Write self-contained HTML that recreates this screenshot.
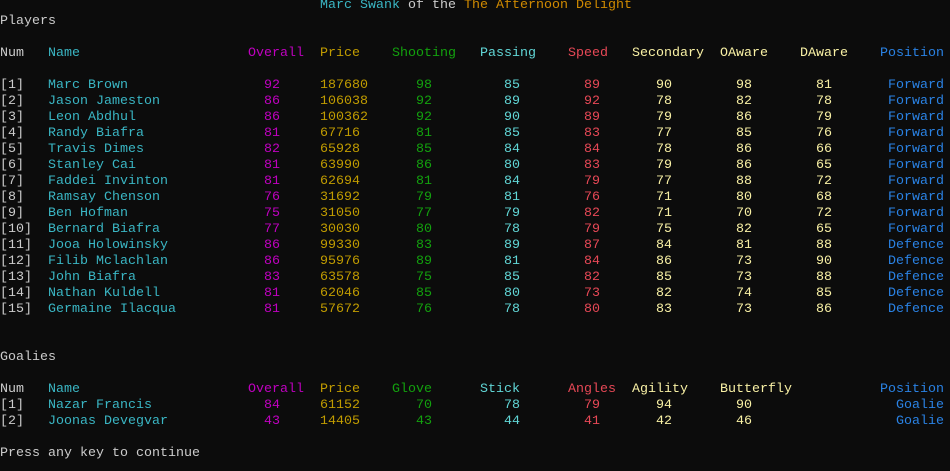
<!DOCTYPE html>
<html><head><meta charset="utf-8"><style>
body{margin:0;width:950px;height:469px;background:#0c0c0c;overflow:hidden;position:relative;font-family:"Liberation Mono",monospace;font-size:13.33px;line-height:16px;color:#cccccc}
#w{position:absolute;left:0;top:2px;width:950px;height:469px}
.c{position:absolute;white-space:pre}
.w{color:#cccccc}.cy{color:#3ab6c4}.m{color:#c000c0}.y{color:#c19c00}.g{color:#13a10e}.pc{color:#61d6d6}.r{color:#e74856}.ly{color:#f9f1a5}.b{color:#2a82e4}.o{color:#d08a00}
</style></head><body><div id="w">
<div class="c" style="left:320px;top:-4px"><span class="cy">Marc Swank</span> of the <span class="o">The Afternoon Delight</span></div>
<div class="c" style="left:0;top:12px">Players</div>
<div class="c" style="left:0;top:44px">Num</div>
<div class="c cy" style="left:48px;top:44px">Name</div>
<div class="c m" style="left:248px;top:44px">Overall</div>
<div class="c y" style="left:320px;top:44px">Price</div>
<div class="c g" style="left:392px;top:44px">Shooting</div>
<div class="c pc" style="left:480px;top:44px">Passing</div>
<div class="c r" style="left:568px;top:44px">Speed</div>
<div class="c ly" style="left:632px;top:44px">Secondary</div>
<div class="c ly" style="left:720px;top:44px">OAware</div>
<div class="c ly" style="left:800px;top:44px">DAware</div>
<div class="c b" style="left:880px;top:44px">Position</div>

<div class="c" style="left:0;top:76px">[1]
[2]
[3]
[4]
[5]
[6]
[7]
[8]
[9]
[10]
[11]
[12]
[13]
[14]
[15]</div>
<div class="c cy" style="left:48px;top:76px">Marc Brown
Jason Jameston
Leon Abdhul
Randy Biafra
Travis Dimes
Stanley Cai
Faddei Invinton
Ramsay Chenson
Ben Hofman
Bernard Biafra
Jooa Holowinsky
Filib Mclachlan
John Biafra
Nathan Kuldell
Germaine Ilacqua</div>
<div class="c m" style="left:264px;top:76px">92
86
86
81
82
81
81
76
75
77
86
86
83
81
81</div>
<div class="c y" style="left:320px;top:76px">187680
106038
100362
67716
65928
63990
62694
31692
31050
30030
99330
95976
63578
62046
57672</div>
<div class="c g" style="left:416px;top:76px">98
92
92
81
85
86
81
79
77
80
83
89
75
85
76</div>
<div class="c pc" style="left:504px;top:76px">85
89
90
85
84
80
84
81
79
78
89
81
85
80
78</div>
<div class="c r" style="left:584px;top:76px">89
92
89
83
84
83
79
76
82
79
87
84
82
73
80</div>
<div class="c ly" style="left:656px;top:76px">90
78
79
77
78
79
77
71
71
75
84
86
85
82
83</div>
<div class="c ly" style="left:736px;top:76px">98
82
86
85
86
86
88
80
70
82
81
73
73
74
73</div>
<div class="c ly" style="left:816px;top:76px">81
78
79
76
66
65
72
68
72
65
88
90
88
85
86</div>
<div class="c b" style="left:888px;top:76px">Forward
Forward
Forward
Forward
Forward
Forward
Forward
Forward
Forward
Forward
Defence
Defence
Defence
Defence
Defence</div>

<div class="c" style="left:0;top:348px">Goalies</div>
<div class="c" style="left:0;top:380px">Num
[1]
[2]</div>
<div class="c cy" style="left:48px;top:380px">Name
Nazar Francis
Joonas Devegvar</div>
<div class="c m" style="left:248px;top:380px">Overall</div>
<div class="c m" style="left:264px;top:396px">84
43</div>
<div class="c y" style="left:320px;top:380px">Price
61152
14405</div>
<div class="c g" style="left:392px;top:380px">Glove</div>
<div class="c g" style="left:416px;top:396px">70
43</div>
<div class="c pc" style="left:480px;top:380px">Stick</div>
<div class="c pc" style="left:504px;top:396px">78
44</div>
<div class="c r" style="left:568px;top:380px">Angles</div>
<div class="c r" style="left:584px;top:396px">79
41</div>
<div class="c ly" style="left:632px;top:380px">Agility</div>
<div class="c ly" style="left:656px;top:396px">94
42</div>
<div class="c ly" style="left:720px;top:380px">Butterfly</div>
<div class="c ly" style="left:736px;top:396px">90
46</div>
<div class="c b" style="left:880px;top:380px">Position</div>
<div class="c b" style="left:896px;top:396px">Goalie
Goalie</div>
<div class="c" style="left:0;top:444px">Press any key to continue</div>
</div></body></html>
